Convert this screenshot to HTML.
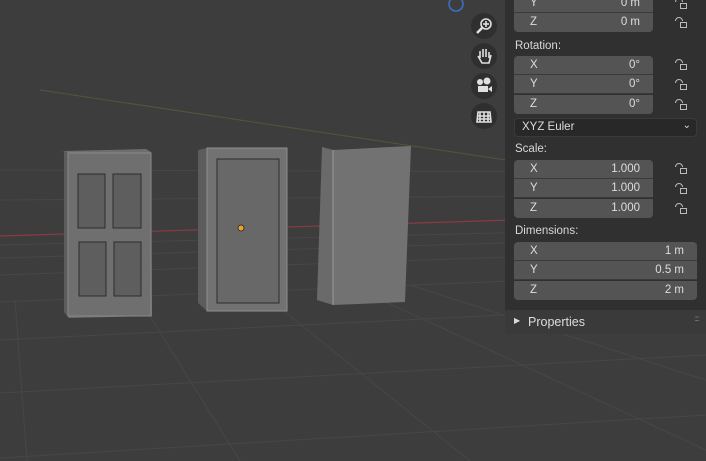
<!DOCTYPE html>
<html><head><meta charset="utf-8"><style>
body{margin:0;width:706px;height:461px;overflow:hidden;background:#3d3d3d;font-family:"Liberation Sans","DejaVu Sans",sans-serif;font-size:11.5px;color:#ddd}
#vp{position:absolute;left:0;top:0}
#panel{position:absolute;left:505px;top:0;width:201px;height:310px;background:#303030}
.lbl{position:absolute;left:10px;color:#d8d8d8}
.f{position:absolute;left:9px;width:139px;height:19px;background:#545454;border-bottom:1px solid #3a3a3a;box-sizing:border-box}
.f span{position:absolute;left:16px;top:3px}
.f b{position:absolute;right:13px;top:3px;font-weight:normal}
.top{border-radius:4px 4px 0 0}.bot{border-radius:0 0 4px 4px;border-bottom:none}
.w{width:183px}
</style></head><body>
<svg id="vp" width="706" height="461">
<g stroke="#474747" stroke-width="1" fill="none">
<line x1="0" y1="302" x2="706" y2="273"/>
<line x1="0" y1="340" x2="706" y2="305"/>
<line x1="0" y1="393" x2="706" y2="355"/>
<line x1="0" y1="458" x2="706" y2="415"/>
<line x1="0" y1="275" x2="706" y2="250"/>
<line x1="0" y1="258" x2="706" y2="237"/>
<line x1="0" y1="245" x2="706" y2="228"/>
<line x1="0" y1="200" x2="706" y2="195"/>
<line x1="0" y1="170" x2="706" y2="172"/>
<line x1="15" y1="300" x2="27" y2="461"/>
<line x1="140" y1="300" x2="240" y2="461"/>
<line x1="270" y1="300" x2="470" y2="461"/>
<line x1="360" y1="290" x2="706" y2="450"/>
<line x1="410" y1="285" x2="706" y2="380"/>
<line x1="150" y1="200" x2="60" y2="150"/>
</g>
<line x1="40" y1="90" x2="706" y2="190" stroke="#4c5a3c" stroke-width="1"/>
<line x1="0" y1="236" x2="706" y2="214" stroke="#8a3a44" stroke-width="1.2"/>
<circle cx="456" cy="4" r="7" fill="none" stroke="#3d6fc4" stroke-width="1.5"/>
<!-- window -->
<polygon points="64,151 146,149 151,152 152,316 69,318 64,312" fill="#6e6e6e"/>
<polygon points="64,151 69,153 69,318 64,312" fill="#5c5c5c"/>
<rect x="68" y="153" width="83" height="163" fill="#6f6f6f" stroke="#8a8a8a" stroke-width="1"/>
<g fill="#5e5e5e" stroke="#2c2c2c" stroke-width="1">
<rect x="78" y="174" width="27" height="54"/><rect x="113" y="174" width="28" height="54"/>
<rect x="79" y="242" width="27" height="54"/><rect x="114" y="242" width="27" height="54"/>
</g>
<!-- door -->
<polygon points="198,150 207,148 207,311 198,303" fill="#5c5c5c"/>
<rect x="207" y="148" width="80" height="163" fill="#727272" stroke="#8e8e8e" stroke-width="1"/>
<rect x="217" y="159" width="62" height="144" fill="#686868" stroke="#2c2c2c"/>
<circle cx="241" cy="228" r="3" fill="#f0a030" stroke="#222" stroke-width="0.8"/>
<!-- box -->
<polygon points="322,147 333,150 333,305 317,300" fill="#6a6a6a"/>
<polygon points="333,150 411,146 405,302 333,305" fill="#727272"/>
<line x1="333" y1="150" x2="333" y2="305" stroke="#9a9a9a"/>
<!-- gizmo buttons -->
<g fill="#2f2f2f"><circle cx="484" cy="26" r="13"/><circle cx="484" cy="56" r="13"/><circle cx="484" cy="86" r="13"/><circle cx="484" cy="116" r="13"/></g>
<g fill="none" stroke="#e0e0e0" stroke-width="1.6">
<circle cx="486" cy="24" r="5"/><line x1="482" y1="28" x2="477" y2="33" stroke-width="2.5"/>
<line x1="486" y1="21" x2="486" y2="27"/><line x1="483" y1="24" x2="489" y2="24"/>
<path d="M480 58v-7M483 57v-8M486 57v-8M489 58v-6M478 56l4 7h7l2-8"/>
<path d="M478 112h12l1 10h-14zM480 112v10M484 112v10M488 112v10M478 116h13M477 119h14"/>
</g>
<g fill="#e0e0e0"><circle cx="480" cy="82" r="3"/><circle cx="487" cy="81" r="3.5"/><rect x="478" y="86" width="10" height="6"/><polygon points="488,89 492,86 492,92"/></g>
</svg>
<div id="panel">
<div class="f" style="top:-6px"><span>Y</span><b>0 m</b></div>
<div class="f bot" style="top:13px"><span>Z</span><b>0 m</b></div>
<div class="lbl" style="top:40px">Rotation:</div>
<div class="f top" style="top:56px"><span>X</span><b>0°</b></div>
<div class="f" style="top:75px"><span>Y</span><b>0°</b></div>
<div class="f bot" style="top:95px"><span>Z</span><b>0°</b></div>
<div style="position:absolute;left:9px;top:118px;width:183px;height:19px;background:#282828;border:1px solid #3a3a3a;border-radius:4px;box-sizing:border-box"><span style="position:absolute;left:7px;top:2px">XYZ Euler</span><span style="position:absolute;right:5px;top:1px;font-size:10px">⌄</span></div>
<div class="lbl" style="top:143px">Scale:</div>
<div class="f top" style="top:160px"><span>X</span><b>1.000</b></div>
<div class="f" style="top:179px"><span>Y</span><b>1.000</b></div>
<div class="f bot" style="top:199px"><span>Z</span><b>1.000</b></div>
<div class="lbl" style="top:225px">Dimensions:</div>
<div class="f w top" style="top:242px"><span>X</span><b>1 m</b></div>
<div class="f w" style="top:261px"><span>Y</span><b>0.5 m</b></div>
<div class="f w bot" style="top:281px"><span>Z</span><b>2 m</b></div>
<svg style="position:absolute;left:0;top:0" width="201" height="220" fill="none" stroke="#bbb" stroke-width="1">
<defs><path id="lk" d="M170.5 6a3.5 3.5 0 0 1 7 0M175.5 7.5h6v5h-6z"/></defs>
<use href="#lk" y="-4"/><use href="#lk" y="15"/>
<use href="#lk" y="57"/><use href="#lk" y="77"/><use href="#lk" y="97"/>
<use href="#lk" y="161"/><use href="#lk" y="181"/><use href="#lk" y="201"/>
</svg>
</div>
<div style="position:absolute;left:505px;top:310px;width:201px;height:24px;background:#3a3a3a"><span style="position:absolute;left:9px;top:6px;font-size:8px">▶</span><span style="position:absolute;left:23px;top:5px;font-size:12.5px">Properties</span><span style="position:absolute;right:7px;top:4px;font-size:8px;color:#888;letter-spacing:-1px">::::</span></div>
</body></html>
